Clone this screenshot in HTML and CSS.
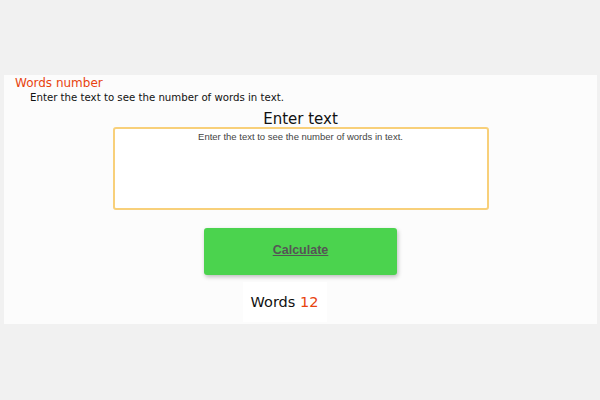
FILE: index.html
```html
<!DOCTYPE html>
<html>
<head>
<meta charset="utf-8">
<link rel="stylesheet" href="styles.css">
</head>
<body>
<div class="panel">
  <div class="title">Words number</div>
  <div class="subtitle">Enter the text to see the number of words in text.</div>
  <div class="label">Enter text</div>
  <textarea class="input" placeholder="Enter the text to see the number of words in text."></textarea>
  <button class="btn">Calculate</button>
  <div class="result">Words <span class="count">12</span></div>
</div>
</body>
</html>
```
FILE: styles.css
```css
html, body {
  margin: 0;
  padding: 0;
  background: #f1f1f1;
}
.panel {
  margin: 75px 3px 0 4px;
  height: 249px;
  background: #fcfcfc;
  display: flex;
  flex-direction: column;
  align-items: center;
  font-family: "Comic Sans MS", "DejaVu Sans", sans-serif;
  box-sizing: border-box;
  padding-top: 1px;
}
.title {
  align-self: flex-start;
  margin-left: 11px;
  font-size: 12px;
  line-height: 14px;
  color: #e8430f;
}
.subtitle {
  align-self: flex-start;
  margin-left: 26px;
  margin-top: 1px;
  font-size: 10.2px;
  line-height: 14px;
  color: #111;
}
.label {
  margin-top: 5px;
  font-size: 15px;
  line-height: 18px;
  color: #111;
}
.input {
  margin-top: -1px;
  width: 376px;
  height: 83px;
  box-sizing: border-box;
  border: 2px solid #f8d07a;
  border-radius: 3px;
  background: #fff;
  resize: none;
  font-family: "Liberation Sans", Arial, sans-serif;
  font-size: 9.5px;
  text-align: center;
  padding: 2px;
  outline: none;
}
.input::placeholder {
  color: #444;
}
.btn {
  margin-top: 18px;
  width: 193px;
  height: 47px;
  border: none;
  border-radius: 3px;
  background: #4bd34e;
  box-shadow: 1px 2px 4px rgba(0,0,0,0.25);
  font-family: "Liberation Sans", Arial, sans-serif;
  font-weight: bold;
  font-size: 12.5px;
  color: #555;
  text-decoration: underline;
  padding: 0 0 3px;
  cursor: pointer;
}
.result {
  margin-top: 7px;
  margin-right: 32px;
  width: 84px;
  height: 40px;
  background: #fff;
  display: flex;
  align-items: center;
  justify-content: center;
  font-size: 14.5px;
  color: #111;
  white-space: pre;
}
.count {
  color: #e8430f;
}
```
